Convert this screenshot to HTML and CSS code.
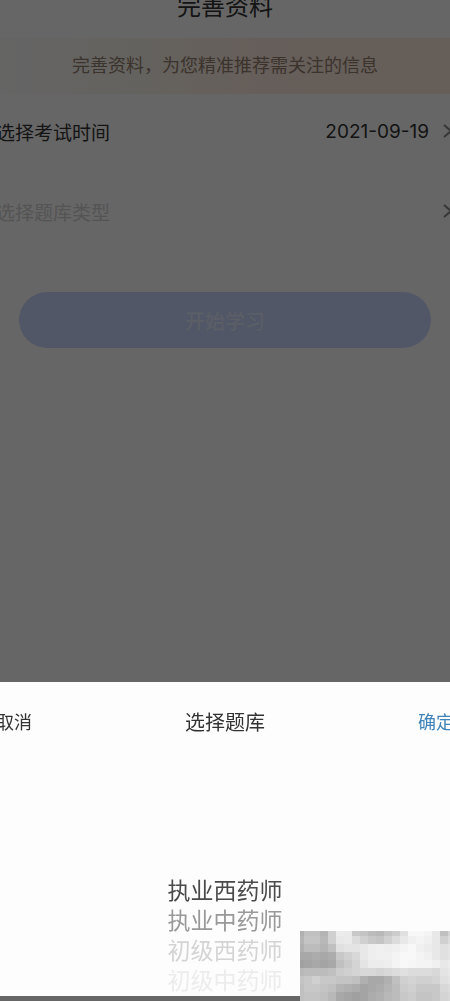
FILE: index.html
```html
<!DOCTYPE html>
<html lang="zh-CN">
<head>
    <meta charset="UTF-8">
    <meta name="viewport" content="width=device-width, initial-scale=1.0">
    <title>完善资料</title>
    <link rel="stylesheet" href="styles.css">
</head>
<body>
    <main class="page">
        <h1 class="page-title">完善资料</h1>
        <p class="notice">完善资料，为您精准推荐需关注的信息</p>
        <form class="profile-form">
            <button type="button" class="field">
                <span class="field-label">选择考试时间</span>
                <span class="field-value">2021-09-19</span>
                <svg class="arrow" viewBox="0 0 12 16" aria-hidden="true"><path d="M2 2 L9 8 L2 14"/></svg>
            </button>
            <button type="button" class="field">
                <span class="field-label placeholder">选择题库类型</span>
                <svg class="arrow" viewBox="0 0 12 16" aria-hidden="true"><path d="M2 2 L9 8 L2 14"/></svg>
            </button>
            <button type="submit" class="submit-btn">开始学习</button>
        </form>
    </main>
    <div class="overlay">
        <section class="sheet">
            <header class="sheet-header">
                <button type="button" class="sheet-btn">取消</button>
                <h2 class="sheet-title">选择题库</h2>
                <button type="button" class="sheet-btn confirm">确定</button>
            </header>
            <ul class="picker">
                <li class="option current">执业西药师</li>
                <li class="option near">执业中药师</li>
                <li class="option far">初级西药师</li>
                <li class="option farthest">初级中药师</li>
            </ul>
        </section>
    </div>
    <svg id="mosaic" class="mosaic" viewBox="4 3 150 70" shape-rendering="crispEdges" aria-hidden="true"></svg>
    <script src="mosaic.js"></script>
</body>
</html>
```
FILE: styles.css
```css
body {
    margin: 0;
    min-height: 100vh;
    overflow: hidden;
    background-color: #fff;
    color: #333;
    font-family: Inter, "Noto Sans CJK SC", sans-serif;
}
h1, h2, p, ul {
    margin: 0;
    padding: 0;
    font-weight: normal;
}
button {
    border: none;
    padding: 0;
    background: none;
    color: inherit;
    font-family: inherit;
    cursor: pointer;
}
.page-title {
    height: 38px;
    font-size: 24px;
    line-height: 14px;
    text-align: center;
}
.notice {
    font-size: 18px;
    line-height: 56px;
    text-align: center;
    color: #94806f;
    background: linear-gradient(90deg, #fcfcfc, #fbf6ec 30%, #ffebe0 60%, #ffebdc);
}
.profile-form {
    display: flex;
    flex-direction: column;
}
.field {
    display: flex;
    align-items: center;
    height: 74px;
    margin: 0 -4px 6px;
    font-size: 19px;
    text-align: left;
}
.field-label {
    flex: 1;
}
.placeholder {
    color: #d2d2d2;
}
.arrow {
    width: 12px;
    height: 16px;
    margin-left: 13px;
    fill: none;
    stroke: #888;
    stroke-width: 2;
}
.submit-btn {
    height: 56px;
    margin: 38px 19px 0;
    border-radius: 28px;
    background-color: #cbdaff;
    color: #e6edff;
    font-size: 20px;
}
.overlay {
    position: fixed;
    inset: 0;
    display: flex;
    flex-direction: column;
    justify-content: flex-end;
    padding-bottom: 5px;
    background-color: rgba(0, 0, 0, 0.6);
}
.sheet {
    background-color: #fdfdfd;
}
.sheet-header {
    display: flex;
    align-items: center;
    justify-content: space-between;
    height: 78px;
    margin: 0 -4px;
}
.sheet-btn {
    font-size: 18px;
}
.confirm {
    color: #3f83b8;
}
.sheet-title {
    font-size: 20px;
}
.picker {
    padding-top: 116px;
    list-style: none;
    font-size: 23px;
    line-height: 30px;
    text-align: center;
}
.current {
    color: #4a4a4a;
}
.near {
    color: #999;
}
.far {
    color: #d4d4d4;
}
.farthest {
    color: #ececec;
}
.mosaic {
    position: fixed;
    right: 0;
    bottom: 0;
    width: 150px;
    height: 70px;
}
```
FILE: mosaic.js
```javascript
// grey level of each 8px tile, row by row
const rows = [
    "b0 c0 c0 b4 d0 ec ea c8 c4 bc b8 c4 cc e0 f8 f8 f4 e8 c0 d4",
    "b4 c4 c4 b8 d0 e8 ea dc d0 c8 c4 d0 dc e8 f0 f4 f0 e8 d0 dc",
    "b0 bc bc b4 c0 e0 e4 e4 e8 ee f0 ee f0 f4 f8 f0 ec e8 e0 e4",
    "a8 a8 ac a8 ac c8 d0 d8 e8 ee f0 f0 f4 f8 f8 f4 f0 e8 e0 e4",
    "a0 a4 a8 a4 a8 c0 ca d4 e4 ec ec ee f4 f8 f6 f4 f4 f0 e8 ec",
    "b8 bc bc bc c0 cc d0 d4 d8 d8 d4 d8 dc e0 dc dc dc d8 e4 e8",
    "c4 c8 d0 c8 c8 c4 c4 c0 b0 a8 a8 b0 c0 d0 d4 d0 d0 d4 e0 e4",
    "c0 c8 c8 c4 c0 b4 b0 ac a4 a8 ac b4 bc cc d0 c8 c8 c8 d8 dc",
    "c0 c4 c4 c0 b8 a8 a4 a0 a4 ac b0 b8 bc c8 cc c4 c4 c8 d4 d8"
];
const tile = 8;
const mosaic = document.getElementById("mosaic");

rows.forEach(function(row, y) {
    row.split(" ").forEach(function(grey, x) {
        const rect = document.createElementNS("http://www.w3.org/2000/svg", "rect");
        rect.setAttribute("x", x * tile);
        rect.setAttribute("y", y * tile);
        rect.setAttribute("width", tile);
        rect.setAttribute("height", y === rows.length - 1 ? tile + 1 : tile);
        rect.setAttribute("fill", "#" + grey + grey + grey);
        mosaic.appendChild(rect);
    });
});
```
